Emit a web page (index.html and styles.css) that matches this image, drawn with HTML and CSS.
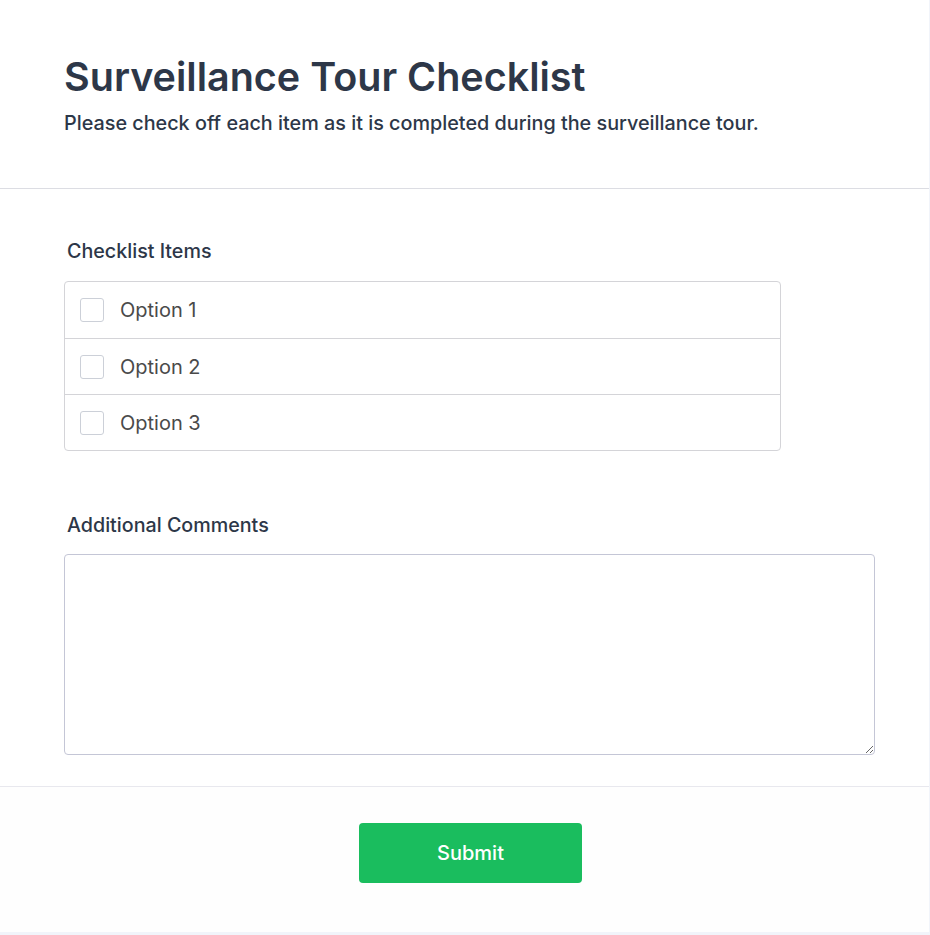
FILE: index.html
```html
<!DOCTYPE html>
<html lang="en">
<head>
<meta charset="utf-8">
<title>Surveillance Tour Checklist</title>
<link rel="stylesheet" href="styles.css">
</head>
<body>
<div class="card">
  <header class="header">
    <h1 class="title">Surveillance Tour Checklist</h1>
    <p class="subtitle">Please check off each item as it is completed during the surveillance tour.</p>
  </header>
  <main class="content">
    <div class="field">
      <div class="label">Checklist Items</div>
      <div class="list">
        <label class="row"><span class="box"></span><span class="opt">Option 1</span></label>
        <label class="row"><span class="box"></span><span class="opt">Option 2</span></label>
        <label class="row"><span class="box"></span><span class="opt">Option 3</span></label>
      </div>
    </div>
    <div class="field comments">
      <div class="label">Additional Comments</div>
      <textarea class="textarea"></textarea>
    </div>
  </main>
  <footer class="footer">
    <button class="submit">Submit</button>
  </footer>
</div>
</body>
</html>
```
FILE: styles.css
```css
html, body {
  margin: 0;
  padding: 0;
}
body {
  background: #f1f4fa;
  font-family: Inter, "Noto Sans", sans-serif;
  color: #2d3748;
  height: 935px;
}
.card {
  width: 929px;
  height: 932px;
  background: #ffffff;
  display: flex;
  flex-direction: column;
  box-sizing: border-box;
}
.header {
  padding: 53px 64px 51px;
  border-bottom: 1px solid #dcdde3;
}
.title {
  margin: 0;
  font-size: 39.5px;
  line-height: 48px;
  font-weight: 600;
  color: #2d3748;
}
.subtitle {
  margin: 8px 0 0;
  font-size: 19.8px;
  line-height: 28px;
  font-weight: 500;
  color: #2d3748;
}
.content {
  padding: 48px 54px 31px 64px;
  border-bottom: 1px solid #e8e8ee;
}
.label {
  font-size: 19.7px;
  line-height: 28px;
  font-weight: 500;
  padding-left: 3px;
  color: #2d3748;
  margin-bottom: 16px;
}
.list {
  width: 717px;
  box-sizing: border-box;
  border: 1px solid #d4d4d8;
  border-radius: 4px;
}
.row {
  display: flex;
  align-items: center;
  gap: 16px;
  height: 55px;
  padding: 0 15px;
  border-top: 1px solid #d4d4d8;
}
.row:first-child {
  border-top: none;
  height: 56px;
}
.box {
  width: 24px;
  height: 24px;
  box-sizing: border-box;
  border: 1px solid #ccd0d8;
  border-radius: 3px;
  background: #fff;
}
.opt {
  font-size: 20px;
  color: #4a4a4a;
}
.comments {
  margin-top: 60px;
}
.comments .label {
  margin-bottom: 15px;
}
.textarea {
  display: block;
  width: 811px;
  height: 201px;
  box-sizing: border-box;
  margin: 0;
  border: 1px solid #c4c6d6;
  border-radius: 4px;
  font-family: inherit;
  font-size: 16px;
  padding: 10px;
}
.footer {
  flex: 1;
  background: #fefefe;
  display: flex;
  justify-content: center;
  align-items: flex-start;
  padding: 36px 0 0 12px;
}
.submit {
  width: 223px;
  height: 60px;
  border: none;
  border-radius: 4px;
  background: #1abd5e;
  color: #ffffff;
  font-family: inherit;
  font-size: 20px;
  font-weight: 500;
}
```
